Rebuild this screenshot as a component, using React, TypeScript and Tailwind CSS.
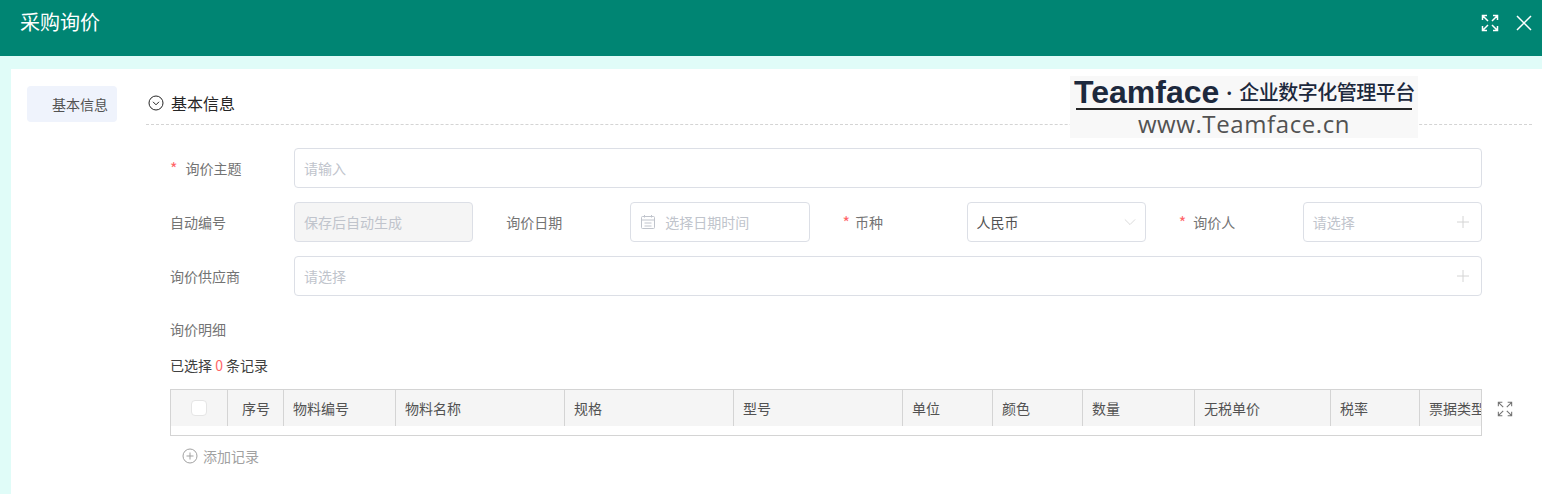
const cjk = { fontFamily: '"Noto Sans CJK SC", "Liberation Sans", sans-serif' };

function Expand({ className, weight }: { className: string; weight: number }) {
  return (
    <svg viewBox="0 0 18 18" fill="none" stroke="currentColor" strokeWidth={weight} className={className}>
      <path d="M1.5 6V1.5H6M1.5 1.5l5.5 5.5M12 1.5h4.5V6M16.5 1.5L11 7M1.5 12v4.5H6M1.5 16.5L7 11M12 16.5h4.5V12M16.5 16.5L11 11" />
    </svg>
  );
}

function Plus() {
  return (
    <svg viewBox="0 0 14 14" fill="none" stroke="currentColor" className="w-3.5 h-3.5 mr-0.5 text-neutral-300">
      <path d="M7 1v12M1 7h12" />
    </svg>
  );
}

function Req({ label, gap }: { label: string; gap: string }) {
  return (
    <span className={`flex items-center ${gap}`}>
      <span className="text-base text-red-400">*</span>
      <span>{label}</span>
    </span>
  );
}

function Field({ label, children }: { label: React.ReactNode; children: React.ReactNode }) {
  return (
    <div className="flex items-center">
      <div className="w-31 shrink-0 text-sm text-neutral-500">{label}</div>
      {children}
    </div>
  );
}

const box = "flex-1 h-10 border border-[#dcdfe6] rounded flex items-center px-2.25 text-sm text-[#c0c4cc]";
const cols = [
  ["", ""],
  ["序号", "pl-3.5"],
  ["物料编号", "pl-2.25"],
  ["物料名称", "pl-2.25"],
  ["规格", "pl-2.25"],
  ["型号", "pl-2.25"],
  ["单位", "pl-2.25"],
  ["颜色", "pl-2.25"],
  ["数量", "pl-2.25"],
  ["无税单价", "pl-2.25"],
  ["税率", "pl-2.25"],
  ["票据类型", "pl-2.25"],
];

export default function App() {
  return (
    <div className="h-[494px] overflow-hidden bg-[#e0fcf8] flex flex-col" style={cjk}>
      <header className="h-14 shrink-0 bg-[#008573] flex items-start justify-between pl-5 pr-2.5 pt-2 text-white">
        <h1 className="text-xl">采购询价</h1>
        <div className="flex items-center gap-4.25 pt-1.5">
          <Expand className="w-4.5 h-4.5" weight={1.5} />
          <svg viewBox="0 0 16 16" fill="none" stroke="currentColor" strokeWidth="1.5" className="w-4 h-4">
            <path d="M1 1l14 14M15 1L1 15" />
          </svg>
        </div>
      </header>
      <main className="relative flex-1 mt-3.25 ml-2.75 bg-white flex pl-4 pr-2.5 pt-4.25">
        <aside className="w-29.75 shrink-0">
          <div className="w-22.5 h-9 rounded bg-[#eff3fc] flex items-center justify-end pr-2.25 text-sm text-neutral-600">基本信息</div>
        </aside>
        <section className="flex-1 min-w-0">
          <div className="h-9.75 flex items-center gap-1.75 pl-0.5 pb-1 border-b border-dashed border-neutral-300 text-base text-neutral-800">
            <svg viewBox="0 0 16 16" fill="none" stroke="currentColor" className="w-4 h-4">
              <circle cx="8" cy="8" r="7" />
              <path d="M5 6.8l3 3 3-3" />
            </svg>
            基本信息
          </div>
          <div className="pl-6 pr-12.5 pt-5.75 flex flex-col gap-3.5">
            <Field label={<Req label="询价主题" gap="gap-2" />}>
              <div className={box}>请输入</div>
            </Field>
            <div className="grid grid-cols-4 gap-8.25">
              <Field label="自动编号">
                <div className={`${box} bg-neutral-100`}>保存后自动生成</div>
              </Field>
              <Field label="询价日期">
                <div className={`${box} gap-2.25`}>
                  <svg viewBox="0 0 16 16" fill="none" stroke="currentColor" className="w-4 h-4">
                    <rect x="1.5" y="2.5" width="13" height="12" rx="1" />
                    <path d="M1.5 6h13M4.5 1v2.5M11.5 1v2.5M4.5 9h7M4.5 12h7" />
                  </svg>
                  选择日期时间
                </div>
              </Field>
              <Field label={<Req label="币种" gap="gap-1.25" />}>
                <div className={`${box} justify-between text-neutral-600`}>
                  人民币
                  <svg viewBox="0 0 14 8" fill="none" stroke="currentColor" className="w-3 h-2 text-neutral-300">
                    <path d="M1 1l6 6 6-6" />
                  </svg>
                </div>
              </Field>
              <Field label={<Req label="询价人" gap="gap-1.75" />}>
                <div className={`${box} justify-between`}>
                  请选择
                  <Plus />
                </div>
              </Field>
            </div>
            <Field label="询价供应商">
              <div className={`${box} justify-between`}>
                请选择
                <Plus />
              </div>
            </Field>
            <div className="pt-2.25">
              <div className="mb-4 text-sm text-neutral-500">询价明细</div>
              <div className="mb-3.5 text-sm text-neutral-700">
                已选择 <span className="text-red-400">0</span> 条记录
              </div>
              <div className="relative">
                <div className="h-11.75 border border-neutral-300 overflow-hidden">
                  <div className="h-9 grid grid-cols-[57px_56px_112px_169px_169px_169px_90px_90px_112px_136px_89px_64px] bg-neutral-100 text-sm text-neutral-600">
                    {cols.map(([name, pad], i) => (
                      <div key={i} className={`flex items-center whitespace-nowrap overflow-hidden ${pad} ${i === 11 ? "" : "border-r border-neutral-300"} ${i === 0 ? "justify-center" : ""}`}>
                        {i === 0 ? <span className="w-4 h-4 bg-white border border-neutral-200 rounded-sm" /> : name}
                      </div>
                    ))}
                  </div>
                </div>
                <Expand className="absolute -right-7.75 top-3 w-4 h-4 text-neutral-500" weight={1.2} />
                <div className="flex items-center gap-1.25 pl-3 pt-2.5 text-sm text-neutral-400">
                  <svg viewBox="0 0 16 16" fill="none" stroke="currentColor" className="w-4 h-4">
                    <circle cx="8" cy="8" r="7" />
                    <path d="M8 4.5v7M4.5 8h7" />
                  </svg>
                  添加记录
                </div>
              </div>
            </div>
          </div>
        </section>
        <div className="absolute left-[1059px] top-1.75 w-87 h-15.5 bg-[#f8f8f8] flex flex-col items-center">
          <div className="w-full h-8 flex items-center pl-1 text-slate-800 leading-none whitespace-nowrap">
            <span className="text-[32px] font-bold" style={{ fontFamily: '"Liberation Sans", sans-serif' }}>Teamface</span>
            <span className="w-5 text-center text-base">·</span>
            <span className="text-xl font-medium tracking-tight">企业数字化管理平台</span>
          </div>
          <div className="w-84 h-0.5 bg-neutral-800" />
          <div className="text-2xl text-neutral-600 tracking-wide leading-7" style={{ fontFamily: '"Open Sans", sans-serif' }}>www.Teamface.cn</div>
        </div>
      </main>
    </div>
  );
}
